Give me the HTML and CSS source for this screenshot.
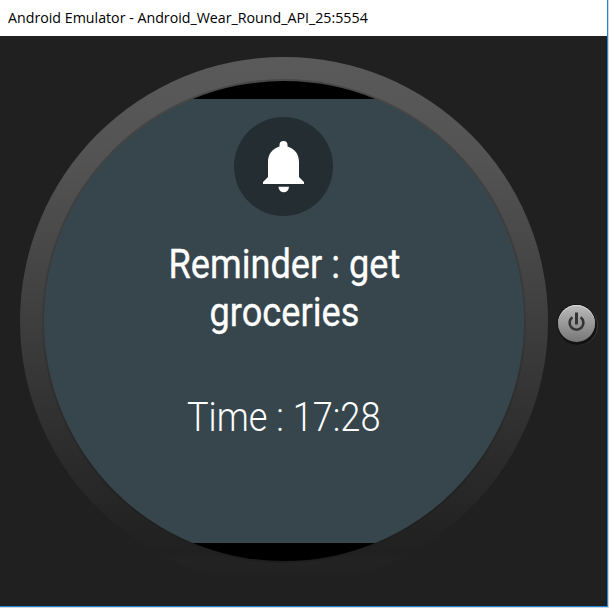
FILE: index.html
```html
<!DOCTYPE html>
<html lang="en">
<head>
<meta charset="utf-8">
<title>Android Emulator</title>
<link rel="stylesheet" href="styles.css">
</head>
<body>
<div class="window">
  <header class="titlebar"><span class="title">Android Emulator - Android_Wear_Round_API_25:5554</span></header>
  <main class="stage">
    <div class="bezel">
      <div class="rim">
        <div class="screen">
          <div class="card">
            <div class="badge">
              <svg width="99" height="99" viewBox="0 0 99 99" fill="#fff">
                <path d="M29 67v-2l5-5V45c0-8 4.500-13.500 11.500-15.500V28a4 4 0 0 1 8 0v1.500C60.500 31.500 65 37 65 45v15l5 5v2z"/>
                <path d="M44.500 69.800h10.500a5.250 5.500 0 0 1-10.500 0z"/>
              </svg>
            </div>
            <p class="message"><span class="line">Reminder : get</span><span class="line">groceries</span></p>
            <p class="time"><span class="line">Time : 17:28</span></p>
          </div>
        </div>
      </div>
    </div>
    <button class="power" aria-label="Power">
      <svg width="19" height="21" viewBox="0 0 19 21" fill="none" stroke="#343434" stroke-width="2.600">
        <path d="M5.400 5.300a6.900 6.900 0 1 0 8.200 0"/>
        <path d="M9.500 .5v12" stroke-width="3"/>
      </svg>
    </button>
  </main>
</div>
</body>
</html>
```

FILE: styles.css
```css
* { box-sizing: border-box; }
body { margin: 0; background: #cfd6dc; overflow: hidden; }
.window {
  width: 608px;
  height: 607px;
  display: flex;
  flex-direction: column;
  background: #202020;
  border-right: 1px solid #2385d5;
  border-bottom: 1px solid #2385d5;
}
.titlebar {
  height: 36px;
  flex: none;
  padding-left: 8px;
  background: #fff;
  line-height: 35px;
  white-space: nowrap;
}
.title {
  display: inline-block;
  font-family: "Open Sans", "Noto Sans", sans-serif;
  font-size: 15px;
  color: #000;
  transform: scaleX(.948);
  transform-origin: left;
}
.stage {
  flex: 1;
  display: flex;
  align-items: flex-start;
  padding: 21px 0 0 20px;
}
.bezel {
  width: 528px;
  height: 528px;
  flex: none;
  padding: 22px;
  border-radius: 50%;
  background: linear-gradient(#5a5a5a 0%, #535353 20%, #3e3e3e 50%, #2c2c2c 75%, #202020 94%, #232323 95.500%, #202020 99%);
}
.rim {
  width: 484px;
  height: 484px;
  padding: 2px;
  border-radius: 50%;
  background: linear-gradient(#484848, #383838 50%, #222 85%, #1e1e1e);
}
.screen {
  width: 480px;
  height: 480px;
  padding: 18px 0;
  border-radius: 50%;
  background: linear-gradient(#000 18px, #36464c 18px, #36464c 462px, #000 462px);
}
.card {
  height: 444px;
  padding-top: 18px;
  display: flex;
  flex-direction: column;
  align-items: center;
  color: #fff;
}
.badge {
  width: 99px;
  height: 99px;
  margin-right: 1px;
  border-radius: 50%;
  background: #242e32;
}
.badge svg, .power svg { display: block; }
.message, .time {
  margin: 0;
  font-family: Roboto, sans-serif;
  font-size: 41px;
  line-height: 48px;
  text-align: center;
  white-space: nowrap;
}
.message { margin-top: 24px; -webkit-text-stroke: .35px #fff; }
.time { margin-top: 57px; font-weight: 300; }
.line { display: block; transform: scaleX(.882); }
.power {
  width: 37px;
  height: 37px;
  flex: none;
  margin: 248px 0 0 10px;
  padding: 0 0 2px;
  border: 0;
  border-radius: 50%;
  display: flex;
  align-items: center;
  justify-content: center;
  background: linear-gradient(#bbb, #959595 55%, #777);
  box-shadow: inset 0 1px 0 #d8d8d8, 0 0 0 1px #151515, 1px 2px 0 1px #111, 2px 2px 0 1px #393939;
}
```
